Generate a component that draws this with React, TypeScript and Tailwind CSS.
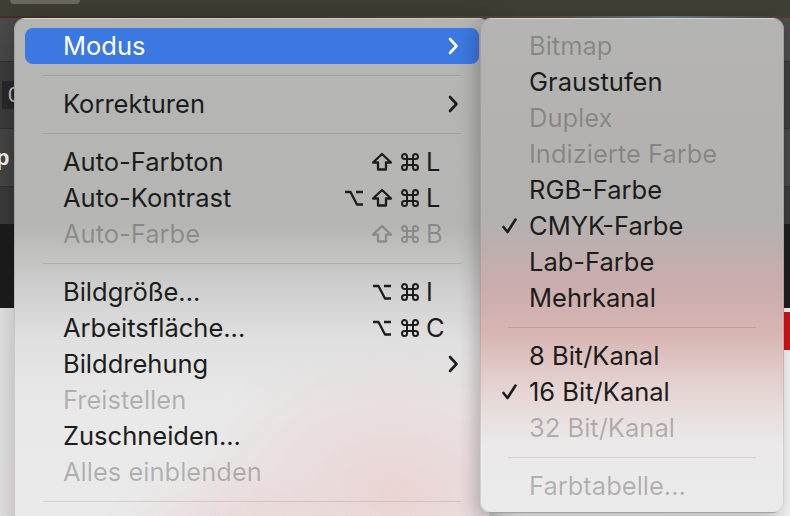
import React from 'react';

type Row =
  | 'sep'
  | {
      label: string;
      disabled?: boolean;
      sub?: boolean;
      active?: boolean;
      mods?: string[];
      keyChar?: string;
      checked?: boolean;
    };

const mainRows: Row[] = [
  { label: 'Modus', sub: true, active: true },
  'sep',
  { label: 'Korrekturen', sub: true },
  'sep',
  { label: 'Auto-Farbton', mods: ['shift', 'cmd'], keyChar: 'L' },
  { label: 'Auto-Kontrast', mods: ['opt', 'shift', 'cmd'], keyChar: 'L' },
  { label: 'Auto-Farbe', mods: ['shift', 'cmd'], keyChar: 'B', disabled: true },
  'sep',
  { label: 'Bildgröße...', mods: ['opt', 'cmd'], keyChar: 'I' },
  { label: 'Arbeitsfläche...', mods: ['opt', 'cmd'], keyChar: 'C' },
  { label: 'Bilddrehung', sub: true },
  { label: 'Freistellen', disabled: true },
  { label: 'Zuschneiden...' },
  { label: 'Alles einblenden', disabled: true },
  'sep',
];

const subRows: Row[] = [
  { label: 'Bitmap', disabled: true },
  { label: 'Graustufen' },
  { label: 'Duplex', disabled: true },
  { label: 'Indizierte Farbe', disabled: true },
  { label: 'RGB-Farbe' },
  { label: 'CMYK-Farbe', checked: true },
  { label: 'Lab-Farbe' },
  { label: 'Mehrkanal' },
  'sep',
  { label: '8 Bit/Kanal' },
  { label: '16 Bit/Kanal', checked: true },
  { label: '32 Bit/Kanal', disabled: true },
  'sep',
  { label: 'Farbtabelle...', disabled: true },
];

const Chevron = ({ white }: { white?: boolean }) => (
  <svg width="11" height="18" viewBox="0 0 11 18" fill="none">
    <path
      d="M2 2 L8.5 9 L2 16"
      stroke={white ? '#ffffff' : '#1c1c1c'}
      strokeWidth="2.6"
      strokeLinecap="round"
      strokeLinejoin="round"
    />
  </svg>
);

const Check = () => (
  <svg width="15" height="16" viewBox="0 0 15 16" fill="none">
    <path d="M1.5 9 L5.5 14 L13.5 1.5" stroke="#1c1c1c" strokeWidth="2.6" strokeLinecap="round" strokeLinejoin="round" />
  </svg>
);

// modifier key glyphs, drawn so they match the mac menu font
const ModKey = ({ k }: { k: string }) => {
  if (k === 'shift')
    return (
      <svg width="22" height="20" viewBox="0 0 22 20" fill="none">
        <path
          d="M11 2 L20 10.5 L15 10.5 L15 17.5 L7 17.5 L7 10.5 L2 10.5 Z"
          stroke="currentColor"
          strokeWidth="2.3"
          strokeLinejoin="round"
        />
      </svg>
    );
  if (k === 'opt')
    return (
      <svg width="20" height="18" viewBox="0 0 20 18" fill="none">
        <path d="M1 3 H6.5 L13 15.5 H19 M12 3 H19" stroke="currentColor" strokeWidth="2.3" strokeLinejoin="round" />
      </svg>
    );
  return (
    <svg width="20" height="20" viewBox="0 0 20 20" fill="none">
      <path
        d="M7 7 H13 V13 H7 Z M7 7 V4.5 A2.5 2.5 0 1 0 4.5 7 H7 M13 7 V4.5 A2.5 2.5 0 1 1 15.5 7 H13 M13 13 V15.5 A2.5 2.5 0 1 0 15.5 13 H13 M7 13 V15.5 A2.5 2.5 0 1 1 4.5 13 H7"
        stroke="currentColor"
        strokeWidth="2"
        strokeLinejoin="round"
      />
    </svg>
  );
};

const Separator = () => (
  <div className="h-[22px] flex items-center mx-[18px]">
    <div className="h-px w-full bg-black/10" />
  </div>
);

const MainRow = ({ row }: { row: Exclude<Row, 'sep'> }) => {
  const color = row.active ? 'text-white' : row.disabled ? 'text-black/25' : 'text-[#1c1c1c]';
  return (
    <div
      className={`h-9 flex items-center pl-[38px] pr-[20px] rounded-[8px] ${row.active ? 'bg-[#3c78e1]' : ''} ${color}`}
    >
      <span className="leading-none">{row.label}</span>
      <div className="ml-auto flex items-center">
        {row.mods && (
          <div className="flex items-center mr-[12px]">
            {row.mods.map((m, i) => (
              <span key={i} className="w-[28px] flex justify-center">
                <ModKey k={m} />
              </span>
            ))}
            <span className="w-[21px] ml-[2px] text-left leading-none">{row.keyChar}</span>
          </div>
        )}
        {row.sub && <Chevron white={row.active} />}
      </div>
    </div>
  );
};

const SubRow = ({ row }: { row: Exclude<Row, 'sep'> }) => (
  <div className={`h-9 flex items-center pl-[21px] ${row.disabled ? 'text-black/25' : 'text-[#1c1c1c]'}`}>
    <span className="w-[27px] flex items-center">{row.checked && <Check />}</span>
    <span className="leading-none">{row.label}</span>
  </div>
);

export default function App() {
  return (
    <div className="relative w-[790px] h-[516px] overflow-hidden font-['Inter','Noto_Sans',sans-serif] text-[25.5px]">
      {/* backdrop: app chrome behind the menus */}
      <div className="flex flex-col h-full">
        <div className="h-[16px] bg-[#3f3e33] pl-[10px]">
          <div className="w-[70px] h-[4px] rounded-b-[6px] bg-[#6a6a5e]" />
        </div>
        <div className="h-[2px] bg-[linear-gradient(90deg,#4a2e22,#3d3a30_30%,#5a4a3a_70%,#6a7a8a_85%,#4a3a30)]" />
        <div className="h-[44px] bg-[#4b4b4b] border-b border-[#333]" />
        <div className="h-[66px] bg-[#3e3e3e] flex flex-col justify-center">
          <div className="w-[12px] h-[28px] bg-[#2a2a2a] text-[#cfcfcf] text-[22px] leading-[28px] pl-[6px] ml-[2px] overflow-hidden font-['Liberation_Sans',sans-serif]">
            0
          </div>
        </div>
        <div className="h-[58px] bg-[#474747] border-t border-[#333] flex items-center">
          <span className="text-white font-bold text-[22px] font-['Liberation_Sans',sans-serif] -ml-[4px]">p</span>
        </div>
        <div className="h-[38px] bg-[#3c3c3c] border-t border-[#333]" />
        <div className="h-[84px] bg-[#1e1e1e]" />
        <div className="flex-1 bg-[linear-gradient(90deg,#e9e9e9,#f6f6f6_2%,#f2f2f2)]" />
      </div>
      <div className="absolute right-0 top-[312px] w-[8px] h-[38px] bg-[#d0101a]" />

      {/* main menu */}
      <div className="absolute left-[14px] top-[18px] w-[476px] h-[520px] rounded-[11px] px-[10px] pt-[9px] border border-black/10 shadow-[0_8px_30px_rgba(0,0,0,0.35)] bg-[radial-gradient(ellipse_45%_30%_at_80%_92%,rgba(235,185,185,0.45),transparent),radial-gradient(ellipse_30%_20%_at_45%_105%,rgba(235,185,185,0.4),transparent),linear-gradient(180deg,#b4b4b2_0%,#b6b6b4_40%,#cfcfcf_52%,#e0e0e0_62%,#e9e9e9_75%,#eaeaea_100%)]">
        {mainRows.map((r, i) => (r === 'sep' ? <Separator key={i} /> : <MainRow key={i} row={r} />))}
      </div>

      {/* submenu */}
      <div className="absolute left-[480px] top-[18px] w-[304px] h-[495px] rounded-[11px] pt-[9px] border border-black/10 shadow-[-4px_6px_18px_rgba(0,0,0,0.25)] bg-[linear-gradient(180deg,#b4b4b2_0%,#b3b1b0_40%,#c9adac_54%,#d8b6b4_64%,#e6d6d5_76%,#ebe9e9_86%,#ebebeb_100%)]">
        {subRows.map((r, i) =>
          r === 'sep' ? (
            <div key={i} className="h-[22px] flex items-center mx-[27px]">
              <div className="h-px w-full bg-black/10" />
            </div>
          ) : (
            <SubRow key={i} row={r} />
          ),
        )}
      </div>
    </div>
  );
}
